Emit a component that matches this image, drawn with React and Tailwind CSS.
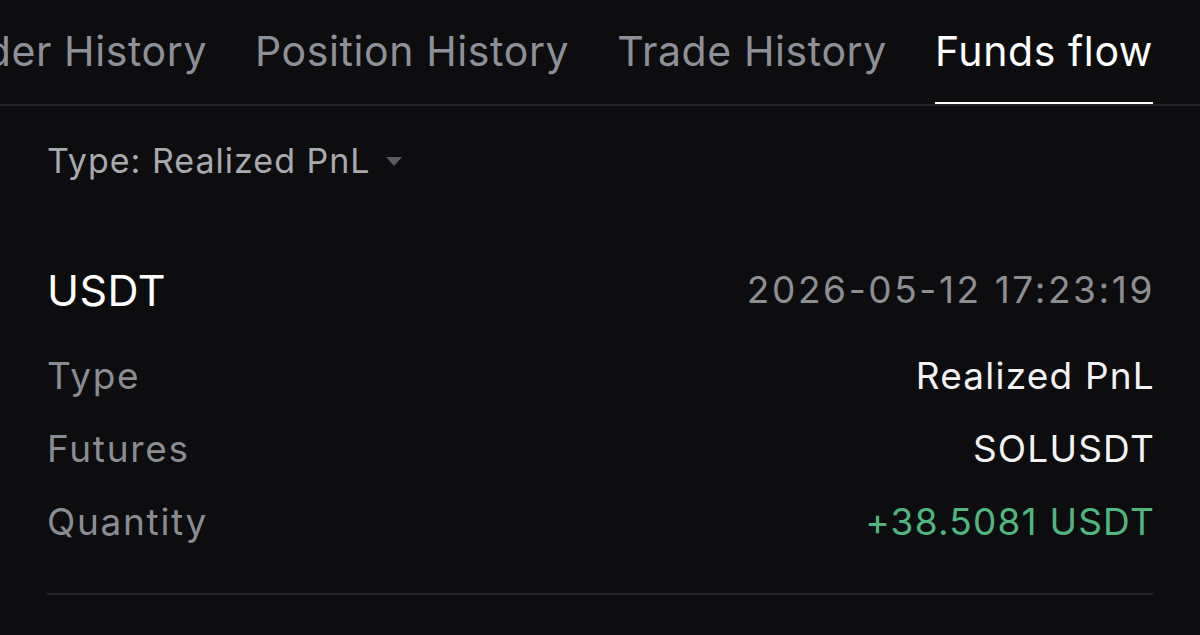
import React from 'react'

const tabs = ['Order History', 'Position History', 'Trade History', 'Funds flow']

const rows = [
    { label: 'Type', value: 'Realized PnL', tone: 'text-[#f2f2f3]' },
    { label: 'Futures', value: 'SOLUSDT', tone: 'text-[#f2f2f3]' },
    { label: 'Quantity', value: '+38.5081 USDT', tone: 'text-[#4fb67f]' },
]

const App = () => {
    return (
        <div className="w-[1200px] h-[635px] overflow-hidden bg-[#0d0d0f] font-['Inter',sans-serif]">
            {/* Tabs */}
            <div className="relative h-[106px] border-b-2 border-[#222326] overflow-hidden">
                <div className="absolute right-[47px] top-0 h-[106px] flex gap-[48px]">
                    {tabs.map((tab, i) => {
                        const active = i === tabs.length - 1
                        return (
                            <div key={tab} className="relative h-full flex items-center pb-[2px]">
                                <span className={`text-[41px] tracking-[0.6px] whitespace-nowrap ${active ? 'text-white' : 'text-[#8e9099]'}`}>
                                    {tab}
                                </span>
                                {active && <div className="absolute left-0 right-0 bottom-[-1px] h-[5px] bg-white"></div>}
                            </div>
                        )
                    })}
                </div>
            </div>

            <div className="px-[47px]">
                {/* Filter */}
                <div className="flex items-center h-[110px] pb-[1px]">
                    <span className="text-[34px] text-[#a9aab0] tracking-[1px]">Type: Realized PnL</span>
                    <svg className="ml-[14px] mt-[2px]" width="18" height="11" viewBox="0 0 18 11">
                        <path d="M1 1 L17 1 L9 10 Z" fill="#5b5c61" />
                    </svg>
                </div>

                {/* Record */}
                <div className="flex items-center justify-between mt-[54px] h-[40px]">
                    <span className="text-[43px] text-white tracking-[0.5px]">USDT</span>
                    <span className="text-[37px] text-[#8d8e94] tracking-[2.6px] -mr-[2px]">2026-05-12 17:23:19</span>
                </div>

                <div className="mt-[43px] flex flex-col gap-[27px]">
                    {rows.map((row) => (
                        <div key={row.label} className="flex items-center justify-between h-[46px]">
                            <span className="text-[37px] text-[#8a8c93] tracking-[1.7px]">{row.label}</span>
                            <span className={`text-[37px] tracking-[1.2px] -mr-[2px] ${row.tone}`}>{row.value}</span>
                        </div>
                    ))}
                </div>

                <div className="mt-[48px] h-[2px] bg-[#25262a]"></div>
            </div>
        </div>
    )
}

export default App
